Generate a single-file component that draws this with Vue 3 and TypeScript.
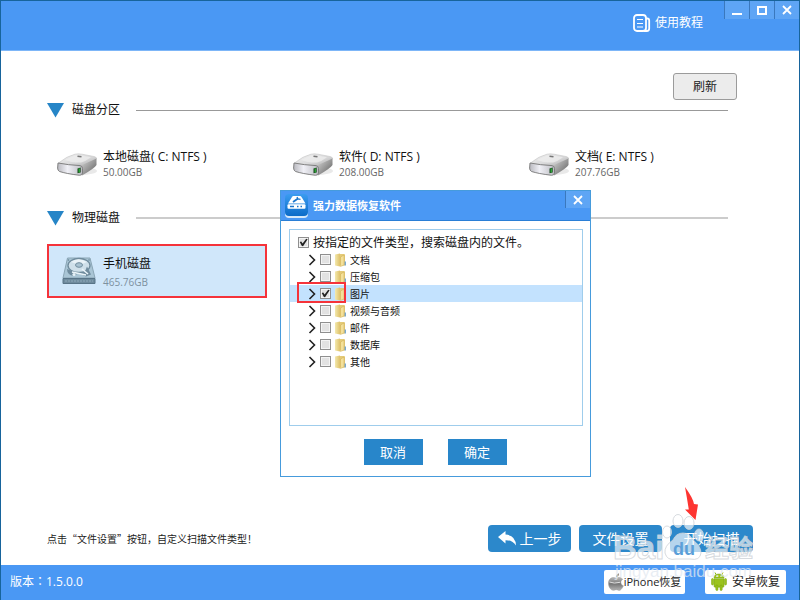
<script setup lang="ts">
import { ref } from 'vue'

interface Volume {
  name: string
  size: string
}

interface FileKind {
  id: string
  label: string
  checked: boolean
}

const volumes: Volume[] = [
  { name: '本地磁盘( C: NTFS )', size: '50.00GB' },
  { name: '软件( D: NTFS )', size: '208.00GB' },
  { name: '文档( E: NTFS )', size: '207.76GB' },
]

const allKinds = ref(true)
const selectedKind = ref('image')
const kinds = ref<FileKind[]>([
  { id: 'doc', label: '文档', checked: false },
  { id: 'zip', label: '压缩包', checked: false },
  { id: 'image', label: '图片', checked: true },
  { id: 'media', label: '视频与音频', checked: false },
  { id: 'mail', label: '邮件', checked: false },
  { id: 'db', label: '数据库', checked: false },
  { id: 'other', label: '其他', checked: false },
])
</script>

<template>
  <div class="window">
    <svg class="defs" width="0" height="0" aria-hidden="true">
      <defs>
        <linearGradient id="drive-top" x1="0" y1="0" x2="1" y2="1">
          <stop offset="0" stop-color="#f4f4f4" />
          <stop offset="0.55" stop-color="#d9d9da" />
          <stop offset="1" stop-color="#a8a8a8" />
        </linearGradient>
        <linearGradient id="drive-front" x1="0" y1="0" x2="1" y2="0">
          <stop offset="0" stop-color="#b9b9bf" />
          <stop offset="0.4" stop-color="#f0f0f6" />
          <stop offset="1" stop-color="#bcbcc2" />
        </linearGradient>
        <linearGradient id="drive-side" x1="0" y1="0" x2="1" y2="1">
          <stop offset="0" stop-color="#d8d8d8" />
          <stop offset="1" stop-color="#5c5c5c" />
        </linearGradient>
        <linearGradient id="folder-back" x1="0" y1="0" x2="1" y2="0">
          <stop offset="0" stop-color="#f3e9ae" />
          <stop offset="1" stop-color="#dfc26a" />
        </linearGradient>
        <linearGradient id="app-blue" x1="0" y1="0" x2="0" y2="1">
          <stop offset="0" stop-color="#3b9cf0" />
          <stop offset="1" stop-color="#0b6bc8" />
        </linearGradient>
        <linearGradient id="apple-metal" x1="0" y1="0" x2="0" y2="1">
          <stop offset="0" stop-color="#b8b8b8" />
          <stop offset="0.5" stop-color="#777" />
          <stop offset="1" stop-color="#b4b4b4" />
        </linearGradient>
      </defs>
    </svg>

    <header class="titlebar">
      <a class="tutorial" href="#tutorial">
        <svg width="18" height="18" viewBox="0 0 18 18" fill="none" stroke="#fff">
          <rect x="1" y="1" width="12" height="16" rx="3" stroke-width="1.8" />
          <path d="M13 4.5h1.2q2 0 2 2v8q0 2.500-2.400 2.500h-3" stroke-width="1.800" />
          <path d="M4 5.500h6M4 9.500h6M4 13h6" stroke-width="1" />
        </svg>
        <span>使用教程</span>
      </a>
      <div class="window-controls">
        <button type="button" aria-label="最小化">
          <svg width="12" height="12" viewBox="0 0 12 12"><path d="M1 10h10" stroke="#fff" stroke-width="2" /></svg>
        </button>
        <button type="button" aria-label="最大化">
          <svg width="12" height="12" viewBox="0 0 12 12"><rect x="2" y="3" width="8" height="7" fill="none" stroke="#fff" stroke-width="2" /></svg>
        </button>
        <button type="button" aria-label="关闭">
          <svg width="12" height="12" viewBox="0 0 12 12"><path d="M2 2l8 8M10 2l-8 8" stroke="#fff" stroke-width="1.800" /></svg>
        </button>
      </div>
    </header>

    <main class="content">
      <div class="toolbar">
        <button type="button" class="refresh">刷新</button>
      </div>

      <section>
        <h2 class="section-title">
          <svg width="17" height="15" viewBox="0 0 17 15"><path d="M0 0h17L8.500 14.500z" fill="#2685c7" /></svg>
          <span>磁盘分区</span>
          <i class="rule"></i>
        </h2>
        <div class="volumes">
          <div v-for="volume in volumes" :key="volume.name" class="volume">
            <svg width="42" height="24" viewBox="0 0 42 24">
              <ellipse cx="23" cy="18" rx="17" ry="4" fill="#e9e9e9" />
              <path d="M1.500 10Q10 3 18 1.200Q21 .5 25 1.200L37 3.500Q40 4.200 39.500 6L25 13.500Q12 13 1.500 10z" fill="url(#drive-top)" stroke="#c5c5c5" stroke-width=".6" />
              <path d="M8 7Q17 2 22 2.200L34 4.200Q29 8 24 9.600Q14 9.500 8 7z" fill="#ededed" opacity=".75" />
              <path d="M24 12.500L39.500 5.500V12Q38 15 25 22.500z" fill="url(#drive-side)" />
              <path d="M1 10Q11 12 23 12.600Q25.500 13 25.500 15.500V20Q25 22.500 22.500 22.300Q9 20.600 2.500 18.500Q.6 17.500 .6 15z" fill="url(#drive-front)" stroke="#777" stroke-width=".9" />
              <path d="M20.500 15.500l3.200-1v5l-3.200.8z" fill="#17451c" />
              <path d="M22.200 15.500v4" stroke="#35d343" stroke-width="1" />
              <path d="M20.500 3.200l4 .5" stroke="#777" stroke-width="1.600" />
            </svg>
            <div class="disk-text">
              <span class="disk-name">{{ volume.name }}</span>
              <span class="disk-size">{{ volume.size }}</span>
            </div>
          </div>
        </div>
      </section>

      <section>
        <h2 class="section-title second">
          <svg width="17" height="15" viewBox="0 0 17 15"><path d="M0 0h17L8.500 14.500z" fill="#2685c7" /></svg>
          <span>物理磁盘</span>
          <i class="rule light"></i>
        </h2>
        <div class="physical">
          <svg width="34" height="28" viewBox="0 0 34 28">
            <path d="M5.500 1H28l5 20H1z" fill="#a9c5d5" stroke="#8aa5b5" />
            <path d="M1 21.500h32V26.500H1z" fill="#6f8b9d" stroke="#587487" />
            <path d="M3 24h28" stroke="#8faabb" stroke-dasharray="2 1" />
            <ellipse cx="17" cy="8.500" rx="11" ry="7" fill="#cfe0ea" stroke="#6f8b9c" stroke-width="1.300" />
            <path d="M9 5Q16-.5 25 5L18 8z" fill="#eaf3f8" />
            <ellipse cx="17" cy="8" rx="3.500" ry="2.300" fill="#a8c2d1" stroke="#718d9e" />
            <path d="M5 12Q5 18 12 19L15 17L10 14zM25 9.500l4 8-5 2-9-4 8-1z" fill="#6f8b9d" />
            <path d="M10 15l14 3M20 12l6 5" stroke="#eaf4f9" stroke-width="1.600" />
            <circle cx="12" cy="17.500" r="1.600" fill="#e8f3f9" />
            <circle cx="6.500" cy="3" r=".8" fill="#67869a" /><circle cx="27" cy="3" r=".8" fill="#67869a" />
          </svg>
          <div class="disk-text loose">
            <span class="disk-name">手机磁盘</span>
            <span class="disk-size">465.76GB</span>
          </div>
        </div>
      </section>

      <div class="actions">
        <p class="hint">点击“文件设置”按钮，自定义扫描文件类型！</p>
        <button type="button" class="primary back">
          <svg width="19" height="15" viewBox="0 0 19 15"><path d="M0 6L7.500 0v3.600Q17.500 4 18 14.500Q14.500 9 7.500 9.200V12.500z" fill="#fff" /></svg>
          <span>上一步</span>
        </button>
        <button type="button" class="primary">文件设置</button>
        <button type="button" class="primary">开始扫描</button>
      </div>
    </main>

    <footer class="statusbar">
      <span class="version">版本：1.5.0.0</span>
      <a class="link-card" href="#iphone">
        <svg width="16" height="18" viewBox="0 0 16 18">
          <path d="M11 .2Q11.300 3.500 7.900 4.300Q7.700 1.500 11 .2z" fill="#888" />
          <path d="M8 5.200C10 4 13 4 14.700 6.300C12 8 12.300 11.500 15.400 12.800C14 16 12.200 18 10.400 17.200C8.700 16.500 7.700 16.500 6.100 17.200C3.500 18 .5 14.500.5 10.300C.5 5.500 4.500 3.500 8 5.200z" fill="url(#apple-metal)" stroke="#999" stroke-width=".5" />
          <path d="M1.500 9Q6 11 12 9.300" fill="none" stroke="#ddd" />
        </svg>
        <span>iPhone恢复</span>
      </a>
      <a class="link-card android" href="#android">
        <svg width="16" height="19" viewBox="0 0 16 19">
          <g fill="#9bc31c" stroke="#78a00d" stroke-width=".5">
            <path d="M3 6Q3 2 8 2t5 4z" />
            <path d="M3 6.700h10v7.500q0 1-1 1H4q-1 0-1-1z" />
            <rect x=".5" y="6.500" width="2" height="6.500" rx="1" />
            <rect x="13.500" y="6.500" width="2" height="6.500" rx="1" />
            <rect x="4.800" y="13" width="2.200" height="5.500" rx="1" />
            <rect x="9" y="13" width="2.200" height="5.500" rx="1" />
          </g>
          <path d="M5 2.500L4 .5M11 2.500l1-2" stroke="#8bb314" />
          <circle cx="6" cy="4.300" r=".7" fill="#fff" /><circle cx="10" cy="4.300" r=".7" fill="#fff" />
        </svg>
        <span>安卓恢复</span>
      </a>
    </footer>

    <div class="dialog" role="dialog" aria-labelledby="dialog-title">
      <div class="dialog-head">
        <svg width="23" height="24" viewBox="0 0 23 24">
          <rect x="0" y="2" width="23" height="22" rx="4" fill="#d6e9fa" />
          <rect x="0" y="0" width="23" height="22" rx="4" fill="url(#app-blue)" />
          <path d="M3 9.500L7 3Q7.500 2 8.500 2H15Q16 2 16.500 3L20.500 9.500z" fill="#fff" />
          <rect x="2.500" y="10.300" width="18" height="4.500" rx="1" fill="#fff" />
          <path d="M8 8L13 4.500" stroke="#1875cc" stroke-width="1.800" />
          <path d="M12 3l1 2 2.500.3" fill="none" stroke="#1875cc" stroke-width="1.300" />
          <path d="M5 12.500h4M12 12.500h1.500M15.500 12.500h1.500" stroke="#1875cc" stroke-width="1.400" />
        </svg>
        <h1 id="dialog-title">强力数据恢复软件</h1>
        <button type="button" class="dialog-close" aria-label="关闭">
          <svg width="12" height="12" viewBox="0 0 12 12"><path d="M2 2l8 8M10 2l-8 8" stroke="#fff" stroke-width="1.800" /></svg>
        </button>
      </div>
      <div class="dialog-body">
        <div class="tree">
          <label class="all">
            <input v-model="allKinds" type="checkbox" />
            <span>按指定的文件类型，搜索磁盘内的文件。</span>
          </label>
          <ul>
            <li v-for="kind in kinds" :key="kind.id" :class="{ selected: kind.id === selectedKind }">
              <svg width="8" height="12" viewBox="0 0 8 12"><path d="M1.500 1L6.500 6L1.500 11" fill="none" stroke="#222" stroke-width="1.600" /></svg>
              <label>
                <input v-model="kind.checked" type="checkbox" />
                <svg width="11" height="14" viewBox="0 0 11 14">
                  <path d="M2.500 1H9Q10 1 10 2V12.500H2.500z" fill="#e3ca78" />
                  <path d="M9.500 8.500H11v4H9.500z" fill="#79a8cf" />
                  <path d="M0 1.500L5 .5V13.500L0 12.500z" fill="url(#folder-back)" />
                  <path d="M5.500 4L9 2V12L5.500 13.500z" fill="#f3e09a" stroke="#cfab4d" stroke-width=".5" />
                </svg>
                <span>{{ kind.label }}</span>
              </label>
              <i v-if="kind.id === selectedKind" class="mark"></i>
            </li>
          </ul>
        </div>
        <div class="dialog-actions">
          <button type="button">取消</button>
          <button type="button">确定</button>
        </div>
      </div>
    </div>

    <svg class="watermark" width="150" height="74" viewBox="0 0 150 74" aria-hidden="true">
      <g>
        <ellipse cx="56" cy="19" rx="4.500" ry="6" />
        <ellipse cx="67" cy="8" rx="5" ry="6.500" />
        <ellipse cx="78" cy="10" rx="5" ry="6.500" />
        <ellipse cx="88" cy="22" rx="4.500" ry="6" />
        <path d="M72 20Q65 20 62 27Q53 33 54 40Q56 48 65 46H79Q89 48 90 40Q90 33 82 27Q78 20 72 20z" />
      </g>
      <text class="brand" x="2" y="46">Bai</text>
      <text class="du" x="62" y="42">du</text>
      <text class="exp" x="94" y="44">经验</text>
      <text class="site" x="4" y="64">jingyan.baidu.com</text>
    </svg>

    <svg class="pointer" width="16" height="36" viewBox="0 0 16 36" aria-hidden="true">
      <path d="M1 1Q9 12 10 18L14 18.500L11.500 34L1 23.500L4.800 23.500Q3 12 1 1z" fill="#fd3531" />
    </svg>
  </div>
</template>

<style>
body {
  margin: 0;
}
</style>

<style scoped>
* {
  box-sizing: border-box;
}

button {
  font: inherit;
  margin: 0;
  padding: 0;
  border: 0;
  cursor: pointer;
}

a {
  color: inherit;
  text-decoration: none;
}

svg {
  flex: none;
  display: block;
}

.window {
  position: relative;
  display: flex;
  flex-direction: column;
  min-height: 100vh;
  overflow: hidden;
  background: #fff;
  border: 1px solid #17649c;
  border-bottom: 0;
  font-family: "Open Sans", "Noto Sans CJK SC", sans-serif;
  font-size: 12px;
  line-height: 16px;
  color: #111;
}

.defs {
  position: absolute;
}

.titlebar {
  display: flex;
  justify-content: flex-end;
  align-items: flex-start;
  gap: 21px;
  height: 50px;
  background: #4a98f4;
  border-bottom: 1px solid #7db6f8;
  color: #fff;
}

.tutorial {
  display: flex;
  align-items: center;
  gap: 4px;
  padding-top: 13px;
}

.window-controls {
  display: flex;
}

.window-controls button,
.dialog-close {
  display: flex;
  align-items: center;
  justify-content: center;
  width: 25px;
  height: 18px;
  background: #5ea5f5;
  border-left: 1px solid #3a78bd;
}

.content {
  flex: 1;
  display: flex;
  flex-direction: column;
  padding: 22px 34px 13px 46px;
}

.toolbar {
  display: flex;
  justify-content: flex-end;
  padding-right: 28px;
}

.refresh {
  width: 64px;
  height: 27px;
  border: 1px solid #9b9b9b;
  border-radius: 3px;
  background: #ececec;
  color: #222;
}

.section-title {
  display: flex;
  align-items: center;
  gap: 8px;
  margin: 0;
  padding-right: 37px;
  font-size: 12px;
  line-height: 20px;
  font-weight: 400;
}

.section-title.second {
  margin-top: 28px;
}

.rule {
  flex: 1;
  height: 1px;
  margin-left: 8px;
  background: #999;
}

.rule.light {
  height: 2px;
  background: #ccc;
}

.volumes {
  display: grid;
  grid-template-columns: repeat(3, 1fr);
  padding: 29px 0 0 10px;
}

.volume {
  display: flex;
  align-items: center;
  gap: 4px;
}

.disk-text {
  display: flex;
  flex-direction: column;
}

.disk-name {
  line-height: 16px;
}

.disk-size {
  font-size: 10px;
  line-height: 15px;
  color: #666;
}

.loose {
  gap: 3px;
  padding-top: 3px;
}

.physical {
  display: flex;
  align-items: center;
  gap: 7px;
  width: 220px;
  height: 54px;
  margin-top: 16px;
  padding-left: 13px;
  border: 2px solid #f5333a;
  background: #d0e7fa;
}

.physical .disk-size {
  color: #7d919f;
}

.actions {
  display: flex;
  align-items: center;
  gap: 8px;
  margin-top: auto;
  padding-right: 12px;
}

.hint {
  flex: 1;
  margin: 0;
  font-family: "Noto Sans CJK SC", sans-serif;
  font-size: 10px;
  color: #222;
}

.primary {
  display: flex;
  align-items: center;
  justify-content: center;
  gap: 3px;
  width: 83px;
  height: 27px;
  border-radius: 4px;
  background: #2c88cb;
  color: #fff;
  font-size: 14px;
}

.statusbar {
  display: flex;
  align-items: center;
  gap: 20px;
  height: 35px;
  padding: 0 13px 2px 9px;
  background: #4a98f4;
}

.version {
  flex: 1;
  font-family: "Open Sans", "Noto Sans CJK TC", sans-serif;
  color: #fff;
}

.link-card {
  display: flex;
  align-items: center;
  justify-content: center;
  width: 81px;
  height: 24px;
  background: #fff;
  border-radius: 2px;
  font-size: 11px;
  color: #222;
}

.android {
  gap: 5px;
  font-size: 12px;
}

.dialog {
  position: absolute;
  left: 279px;
  top: 189px;
  width: 311px;
  background: #fff;
  border: 1px solid #469bdc;
}

.dialog-head {
  display: flex;
  align-items: center;
  gap: 5px;
  height: 30px;
  padding-left: 4px;
  background: #4a98f4;
  border-bottom: 1px solid #2a7fd6;
}

.dialog-head h1 {
  flex: 1;
  margin: 0;
  font-size: 11px;
  font-weight: 700;
  color: #fff;
}

.dialog-close {
  align-self: flex-start;
  height: 17px;
}

.dialog-body {
  padding: 8px 7px 11px 8px;
}

.tree {
  height: 197px;
  padding-top: 4px;
  border: 1px solid #9fcdec;
}

.all {
  display: flex;
  align-items: center;
  gap: 4px;
  height: 17px;
  padding-left: 8px;
}

.tree ul {
  margin: 0;
  padding: 0;
  list-style: none;
}

.tree li {
  position: relative;
  display: flex;
  align-items: center;
  gap: 4px;
  height: 17px;
  padding-left: 18px;
  font-size: 10px;
}

.tree li label {
  display: flex;
  align-items: center;
  gap: 4px;
}

.tree li.selected {
  background: #c3e2fe;
}

.mark {
  position: absolute;
  left: 7px;
  top: -3px;
  width: 49px;
  height: 21px;
  border: 2px solid #f5333a;
}

.tree input {
  appearance: none;
  flex: none;
  display: flex;
  align-items: center;
  justify-content: center;
  width: 11px;
  height: 11px;
  margin: 0;
  border: 1px solid #8f8f8f;
  background: #e2e2e2;
  box-shadow: inset 0 0 0 1px #f4f4f4;
}

.tree input:checked::after {
  content: "";
  width: 9px;
  height: 9px;
  background: #222;
  clip-path: polygon(8% 45%, 25% 38%, 40% 60%, 80% 8%, 96% 14%, 45% 92%, 32% 90%);
}

.dialog-actions {
  display: flex;
  justify-content: center;
  gap: 25px;
  padding: 13px 2px 0 0;
}

.dialog-actions button {
  width: 59px;
  height: 26px;
  background: #2886ca;
  color: #fff;
  font-size: 13px;
}

.pointer {
  position: absolute;
  right: 99px;
  bottom: 78px;
}

.watermark {
  position: absolute;
  right: 38px;
  bottom: 13px;
  pointer-events: none;
  fill: rgba(255, 255, 255, 0.65);
  stroke: rgba(205, 210, 215, 0.8);
  stroke-width: 1px;
  font-family: "Liberation Sans", "Noto Sans CJK SC", sans-serif;
}

.brand {
  font-size: 33px;
  font-weight: 700;
}

.du {
  font-size: 18px;
  font-weight: 700;
  fill: #5b9fd8;
  stroke: none;
}

.exp {
  font-size: 24px;
  font-weight: 700;
}

.site {
  font-size: 17px;
  fill: rgba(225, 232, 240, 0.75);
  stroke: none;
}
</style>
